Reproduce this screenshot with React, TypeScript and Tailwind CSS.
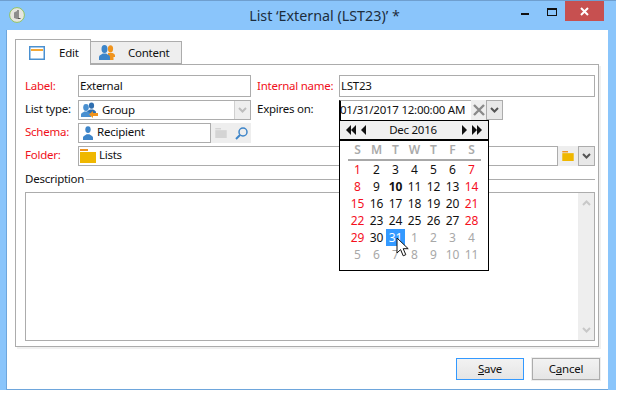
import type { ReactNode } from 'react';

const FONT = "font-['Noto_Sans',sans-serif]";

function Chevron({ color = '#555' }: { color?: string }) {
  return (
    <svg width="9" height="7" viewBox="0 0 9 7">
      <path d="M1 1l3.5 3.5L8 1" fill="none" stroke={color} strokeWidth="2" />
    </svg>
  );
}

function FolderIcon({ w = 16, h = 14, color = '#efb700', tab = '#f0941e' }) {
  return (
    <svg width={w} height={h} viewBox="0 0 16 14">
      <rect x="0" y="0" width="8" height="2" fill={tab} />
      <rect x="0" y="3" width="16" height="11" fill={color} />
    </svg>
  );
}

function PersonIcon() {
  return (
    <svg width="10" height="14" viewBox="0 0 10 14">
      <ellipse cx="5" cy="3.6" rx="2.7" ry="3.4" fill="#3d85c9" />
      <path d="M0 14v-2.4c0-1.6 2.4-2.4 3.6-3.4h2.8c1.2 1 3.6 1.8 3.6 3.4V14z" fill="#3d85c9" />
    </svg>
  );
}

function EditIcon() {
  return (
    <svg width="16" height="14" viewBox="0 0 16 14">
      <rect x="0" y="0" width="16" height="14" fill="#4a90d0" />
      <rect x="1.5" y="1.5" width="13" height="11" fill="#fff" />
      <rect x="2" y="3" width="12" height="2" fill="#f4a836" />
    </svg>
  );
}

function ContentIcon() {
  return (
    <svg width="16" height="15" viewBox="0 0 16 15">
      <ellipse cx="11.5" cy="3.8" rx="2.6" ry="3.6" fill="#f0941e" />
      <path d="M9 15V8h4.5c1.4.6 2.5 1.4 2.5 2.6V12h-1.5v3z" fill="#f0941e" />
      <ellipse cx="5.5" cy="4" rx="3" ry="4" fill="#3d85c9" />
      <path d="M0 15v-3c0-1.8 2.6-2.4 3.8-3.4h3.4c1.2 1 3.8 1.6 3.8 3.4v3z" fill="#3d85c9" />
    </svg>
  );
}

function GroupIcon() {
  return (
    <svg width="17" height="17" viewBox="0 0 17 17">
      <ellipse cx="10.5" cy="3.6" rx="2.6" ry="3.2" fill="#2f6fb0" />
      <path d="M6 12v-2c0-1.4 2-1.8 3-2.6h3c1 .8 3 1.2 3 2.6v2z" fill="#2f6fb0" />
      <ellipse cx="5" cy="5.5" rx="2.8" ry="3.4" fill="#4a90d0" />
      <path d="M0 15v-2.6c0-1.6 2.2-2 3.2-3h3.6c1 1 3.2 1.4 3.2 3V15z" fill="#4a90d0" />
      <path d="M8 12.5l4-3.5v2h5v3h-5v2z" fill="#f0941e" />
    </svg>
  );
}

function WindowIcon() {
  return (
    <svg width="16" height="16" viewBox="0 0 16 16">
      <circle cx="8" cy="8" r="7.4" fill="#e6e6e0" stroke="#8cc152" strokeWidth="0.9" />
      <path d="M5 5.5l3-1.5v8l-3-1z" fill="#8d8d8d" />
      <path d="M9 3v8.5h2.5" fill="none" stroke="#555" strokeWidth="1.2" />
    </svg>
  );
}

function Arrow({ dir, double }: { dir: 'left' | 'right'; double?: boolean }) {
  const tri = dir === 'left' ? 'M5 0v10L0 5z' : 'M0 0v10l5-5z';
  return (
    <svg width={double ? 10 : 5} height="10" viewBox={double ? '0 0 10 10' : '0 0 5 10'}>
      <path d={tri} fill="#111" />
      {double && <path d={tri} fill="#111" transform="translate(5 0)" />}
    </svg>
  );
}

function Field({ className, children }: { className: string; children: ReactNode }) {
  return (
    <div className={`flex items-center border border-[#acacac] bg-white text-[#111] ${className}`}>
      {children}
    </div>
  );
}

const weeks: { d: number; muted?: boolean }[][] = [
  [1, 2, 3, 4, 5, 6, 7].map((d) => ({ d })),
  [8, 9, 10, 11, 12, 13, 14].map((d) => ({ d })),
  [15, 16, 17, 18, 19, 20, 21].map((d) => ({ d })),
  [22, 23, 24, 25, 26, 27, 28].map((d) => ({ d })),
  [{ d: 29 }, { d: 30 }, { d: 31 }, { d: 1, muted: true }, { d: 2, muted: true }, { d: 3, muted: true }, { d: 4, muted: true }],
  [5, 6, 7, 8, 9, 10, 11].map((d) => ({ d, muted: true })),
];

function Calendar() {
  return (
    <div className="absolute left-0 top-full z-10 h-[151px] w-[150px] border border-black bg-white">
      <div className="flex h-[20px] items-center justify-between border-b-2 border-black bg-[#f0f0f0] px-[6px] text-[#111]">
        <div className="flex items-center gap-[5px]">
          <Arrow dir="left" double />
          <Arrow dir="left" />
        </div>
        <span className="pr-[2px]">Dec 2016</span>
        <div className="flex items-center gap-[5px]">
          <Arrow dir="right" />
          <Arrow dir="right" double />
        </div>
      </div>
      <div className="pl-[8px]">
        <div className="grid h-[20px] w-[133px] grid-cols-[repeat(7,19px)] items-center border-b-2 border-[#a8a8a8] text-center text-[12px] font-semibold tracking-normal text-[#aaaaaa]">
          {['S', 'M', 'T', 'W', 'T', 'F', 'S'].map((d, i) => (
            <span key={i}>{d}</span>
          ))}
        </div>
        <div className="grid grid-cols-[repeat(7,19px)] auto-rows-[17px] items-center text-center text-[12px] leading-[17px] tracking-normal">
          {weeks.flatMap((week, w) =>
            week.map((cell, i) => {
              const weekend = i === 0 || i === 6;
              let cls = 'text-[#111]';
              if (cell.muted) cls = 'text-[#a8a8a8]';
              else if (cell.d === 31) cls = 'bg-[#3399ff] text-white';
              else if (weekend) cls = 'text-[#f5101e]';
              else if (cell.d === 10) cls = 'font-bold text-[#111]';
              return (
                <span key={`${w}-${i}`} className={cls}>
                  {cell.d}
                </span>
              );
            }),
          )}
        </div>
      </div>
      {/* mouse pointer over the selected day */}
      <svg className="absolute left-[56px] top-[116px]" width="13" height="21" viewBox="0 0 13 21">
        <path d="M1 1v15l3.6-3.4 2.6 6.2 2.6-1.1-2.6-6h5z" fill="#fff" stroke="#111" strokeWidth="1" />
      </svg>
    </div>
  );
}

export default function App() {
  return (
    <div className={`h-[419px] w-[643px] overflow-hidden bg-white text-[11.5px] tracking-[-0.25px] ${FONT}`}>
      <div className="flex h-[390px] w-[616px] flex-col border-t border-[#6f9fcf] bg-[#8ac5fb]">
        {/* Title bar */}
        <div className="relative flex h-[29px] shrink-0 items-center justify-center pl-[33px]">
          <div className="absolute left-[9px] top-[6px]">
            <WindowIcon />
          </div>
          <span className="text-[14.3px] tracking-normal text-[#1d2d3d]">List ‘External (LST23)’ *</span>
          <div className="absolute right-[12px] top-0 flex items-start">
            <div className="mt-[12px] h-[2px] w-[8px] bg-[#111]" />
            <div className="ml-[18px] mt-[7px] h-[8px] w-[10px] border border-t-2 border-[#111]" />
            <div className="ml-[8px] flex h-[20px] w-[39px] items-center justify-center bg-[#c75050]">
              <svg width="9" height="9" viewBox="0 0 9 9">
                <path d="M1 1l7 7M8 1L1 8" stroke="#fff" strokeWidth="2" />
              </svg>
            </div>
          </div>
        </div>

        {/* Window body */}
        <div className="ml-[6px] mr-[8px] flex flex-1 flex-col border-b border-l border-[#6ea6dc] bg-white pl-[8px] pr-[8px] pt-[9px]">
          <div className="flex h-[25px] items-end">
            <div className="relative z-10 -mb-px flex h-[26px] w-[76px] items-center border border-b-0 border-[#acacac] bg-white pl-[13px]">
              <EditIcon />
              <span className="ml-[14px] text-[#111]">Edit</span>
            </div>
            <div className="flex h-[23px] w-[91px] items-center border border-l-0 border-[#acacac] bg-[#eeeeee] pl-[8px]">
              <ContentIcon />
              <span className="ml-[13px] text-[#111]">Content</span>
            </div>
          </div>

          <div className="flex h-[283px] w-[584px] flex-col border border-[#acacac] pl-[9px] pr-[3px] pt-[10px] shadow-[2px_2px_0_#f0f0f0]">
            <div className="flex h-[22px] items-center">
              <span className="w-[53px] text-[#f01020]">Label:</span>
              <Field className="h-full w-[173px] pl-[1px]">External</Field>
              <span className="ml-[6px] w-[82px] whitespace-nowrap text-[#f01020]">Internal name:</span>
              <Field className="h-full w-[256px] pl-[1px]">LST23</Field>
            </div>

            <div className="mt-[3px] flex h-[20px] items-center">
              <span className="w-[53px] pb-[2px] text-[#111]">List type:</span>
              <Field className="h-full w-[173px] pl-[2px]">
                <GroupIcon />
                <span className="ml-[4px] flex-1">Group</span>
                <div className="flex h-full w-[16px] items-center justify-center border-l border-[#d0d0d0] bg-[#eeeeee]">
                  <Chevron color="#bdbdbd" />
                </div>
              </Field>
              <span className="ml-[6px] w-[82px] pb-[2px] text-[#111]">Expires on:</span>
              <div className="relative flex h-full w-[164px] items-stretch">
                <div className="flex w-[132px] items-center overflow-hidden border-l-2 border-t border-l-black border-t-[#acacac] bg-white pb-[2px] text-[#111]">
                  <span className="-ml-px whitespace-nowrap">01/31/2017 12:00:00 AM</span>
                </div>
                <div className="flex w-[15px] items-center justify-center bg-[#eeeeee]">
                  <svg width="12" height="12" viewBox="0 0 12 12">
                    <path d="M1 1l10 10M11 1L1 11" stroke="#8a8a8a" strokeWidth="2.4" />
                  </svg>
                </div>
                <div className="flex w-[17px] items-center justify-center border border-[#acacac] bg-[#e8e8e8]">
                  <Chevron />
                </div>
                <Calendar />
              </div>
            </div>

            <div className="mt-[3px] flex h-[20px] items-center">
              <span className="w-[53px] pb-[2px] text-[#f01020]">Schema:</span>
              <Field className="h-full w-[133px] pl-[4px]">
                <PersonIcon />
                <span className="ml-[4px] pb-[2px]">Recipient</span>
              </Field>
              <div className="flex h-full w-[20px] items-center justify-center bg-[#eeeeee]">
                <FolderIcon w={12} h={10} color="#d4d4d4" tab="#d4d4d4" />
              </div>
              <div className="flex h-full w-[20px] items-center justify-center bg-[#eeeeee]">
                <svg width="13" height="13" viewBox="0 0 13 13">
                  <circle cx="8" cy="5" r="4" fill="none" stroke="#3d85c9" strokeWidth="1.5" />
                  <path d="M5 8l-4 4" stroke="#3d85c9" strokeWidth="2" />
                </svg>
              </div>
            </div>

            <div className="mt-[3px] flex h-[20px] items-center">
              <span className="w-[53px] pb-[2px] text-[#f01020]">Folder:</span>
              <Field className="h-full w-[481px] pl-[1px]">
                <FolderIcon />
                <span className="ml-[3px] pb-[2px]">Lists</span>
              </Field>
              <div className="flex h-full w-[20px] items-center justify-center bg-[#eeeeee]">
                <FolderIcon w={12} h={10} />
              </div>
              <div className="flex h-full w-[17px] items-center justify-center border border-[#acacac] bg-[#e8e8e8]">
                <Chevron />
              </div>
            </div>

            <div className="mt-[6px] flex h-[14px] items-center text-[#111]">
              <span>Description</span>
              <div className="ml-[2px] h-px flex-1 bg-[#acacac]" />
            </div>

            <div className="mt-[6px] flex h-[149px] justify-end border border-[#acacac] bg-white">
              <div className="flex w-[16px] flex-col items-center justify-between bg-[#eeeeee] py-[6px]">
                <div className="rotate-180">
                  <Chevron color="#c8c8c8" />
                </div>
                <Chevron color="#c8c8c8" />
              </div>
            </div>
          </div>

          <div className="mt-[11px] flex justify-end gap-[8px]">
            <button className="h-[22px] w-[68px] border border-[#3399ff] bg-gradient-to-b from-[#f2f2f2] to-[#e5e5e5] text-[#111]">
              <span className="underline">S</span>ave
            </button>
            <button className="h-[22px] w-[68px] border border-[#acacac] bg-gradient-to-b from-[#f2f2f2] to-[#e5e5e5] text-[#111] shadow-[0_0_0_1px_#eeeeee]">
              C<span className="underline">a</span>ncel
            </button>
          </div>
        </div>
      </div>
    </div>
  );
}
